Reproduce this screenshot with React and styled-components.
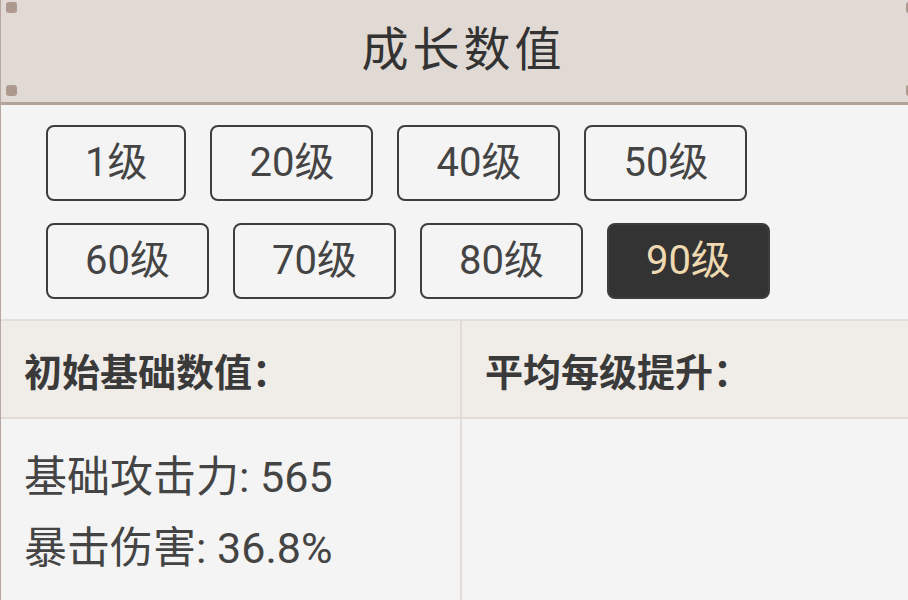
import React from "react";
import styled, { createGlobalStyle } from "styled-components";

const FONT = `"Roboto", "Noto Sans CJK SC", "Noto Sans", sans-serif`;

const Global = createGlobalStyle`
  html, body { margin: 0; padding: 0; overflow: hidden; background: #f4f4f4; }
  body { font-family: ${FONT}; }
`;

const Page = styled.div`
  position: relative;
  width: 922px;
  min-height: 600px;
  background: #f4f4f4;
  border-left: 1px solid #b5a8a0;
  box-sizing: border-box;
`;

const Header = styled.header`
  position: relative;
  height: 105px;
  background: #e1d9d3;
  border-bottom: 3px solid #b2a49b;
  display: flex;
  align-items: center;
  justify-content: center;
  box-sizing: border-box;
  padding-bottom: 12px;
`;

const Title = styled.h1`
  margin: 0;
  font-family: "Noto Sans CJK SC", sans-serif;
  font-size: 47px;
  font-weight: 400;
  letter-spacing: 4px;
  color: #333;
  line-height: 1;
  padding-left: 4px;
`;

const Corner = styled.span`
  position: absolute;
  width: 11px;
  height: 11px;
  background: #ad998d;
  border-radius: 3px;
  ${(p) => (p.$top ? "top: 2px;" : "bottom: 6px;")}
  ${(p) => (p.$right ? "right: 5px;" : "left: 5px;")}
`;

const LevelArea = styled.div`
  display: flex;
  flex-direction: column;
  gap: 22px;
  padding: 20px 0 20px 45px;
`;

const LevelRow = styled.div`
  display: flex;
  gap: 24px;
`;

const LevelButton = styled.button`
  height: 76px;
  padding: 0 37px;
  box-sizing: border-box;
  border: 2px solid #3d3d3d;
  border-radius: 8px;
  background: ${(p) => (p.$active ? "#333333" : "transparent")};
  color: ${(p) => (p.$active ? "#efd9b0" : "#444")};
  font-family: ${FONT};
  font-size: 40px;
  line-height: 1;
  cursor: pointer;
`;

const Table = styled.div`
  display: grid;
  grid-template-columns: 461px 461px;
  border-top: 2px solid #e4ded8;
`;

const HeadCell = styled.div`
  height: 98px;
  box-sizing: border-box;
  background: #f0ece8;
  border-bottom: 2px solid #e2dcd6;
  border-right: ${(p) => (p.$divider ? "2px solid #e2dcd6" : "none")};
  display: flex;
  align-items: center;
  padding-left: 23px;
  font-family: "Noto Sans CJK SC", sans-serif;
  font-size: 38px;
  font-weight: 700;
  color: #3a3a3a;
`;

const BodyCell = styled.div`
  min-height: 182px;
  box-sizing: border-box;
  padding: 23px 23px;
  border-right: ${(p) => (p.$divider ? "2px solid #e2dcd6" : "none")};
`;

const StatLine = styled.div`
  height: 71px;
  line-height: 71px;
  font-size: 43px;
  color: #444;
  white-space: nowrap;
`;

const rows = [
  ["1级", "20级", "40级", "50级"],
  ["60级", "70级", "80级", "90级"],
];

export default function App() {
  return (
    <>
      <Global />
      <Page>
        <Header>
          <Corner $top />
          <Corner />
          <Corner $top $right />
          <Corner $right />
          <Title>成长数值</Title>
        </Header>
        <LevelArea>
          {rows.map((r, i) => (
            <LevelRow key={i}>
              {r.map((l) => (
                <LevelButton key={l} $active={l === "90级"}>
                  {l}
                </LevelButton>
              ))}
            </LevelRow>
          ))}
        </LevelArea>
        <Table>
          <HeadCell $divider>初始基础数值：</HeadCell>
          <HeadCell>平均每级提升：</HeadCell>
          <BodyCell $divider>
            <StatLine>基础攻击力: 565</StatLine>
            <StatLine>暴击伤害: 36.8%</StatLine>
          </BodyCell>
          <BodyCell />
        </Table>
      </Page>
    </>
  );
}
